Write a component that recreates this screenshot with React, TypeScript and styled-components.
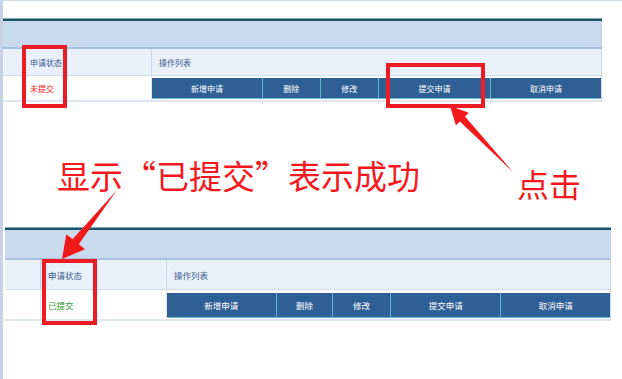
import React from "react";
import styled, { createGlobalStyle } from "styled-components";

const Global = createGlobalStyle`
  html, body { margin: 0; padding: 0; background: #ffffff; }
  body { font-family: "Noto Sans CJK SC", "Noto Sans", sans-serif; }
`;

const Page = styled.div`
  position: relative;
  width: 622px;
  height: 379px;
  overflow: hidden;
  display: flex;
  background: #ffffff;
`;

const LeftStrip = styled.div`
  width: 3px;
  flex: none;
  background: #c7d2e4;
`;

const Main = styled.div`
  flex: 1;
  display: flex;
  flex-direction: column;
  border-top: 1px solid #cfd6e2;
`;

const Panel = styled.section<{ $w: number; $ml: number; $mt: number }>`
  width: ${(p) => p.$w}px;
  margin-left: ${(p) => p.$ml}px;
  margin-top: ${(p) => p.$mt}px;
  display: flex;
  flex-direction: column;
  flex: none;
`;

const TopRule = styled.div`
  height: 3px;
  box-sizing: border-box;
  background: #1d5367;
  border-top: 1px solid #79aeb9;
`;

const Band = styled.div<{ $h: number }>`
  height: ${(p) => p.$h}px;
  background: #c9d9ee;
  border-bottom: 2px solid #a8c0df;
  border-right: 1px solid #bccde5;
`;

const Grid = styled.div<{ $cols: string }>`
  display: grid;
  grid-template-columns: ${(p) => p.$cols};
  border-bottom: 2px solid #dde6f2;
  border-right: 1px solid #c6d5ea;
`;

const HeadCell = styled.div<{ $h: number; $fs: number; $first?: boolean }>`
  height: ${(p) => p.$h}px;
  box-sizing: border-box;
  background: #e9f0f9;
  border-left: ${(p) => (p.$first ? "none" : "1px solid #c9d6e9")};
  border-bottom: 1px solid #d2dcec;
  display: flex;
  align-items: center;
  padding-left: 7px;
  color: #3a5a8c;
  font-size: ${(p) => p.$fs}px;
  white-space: nowrap;
`;

const DataCell = styled.div<{ $h: number; $fs: number; $color?: string; $first?: boolean }>`
  height: ${(p) => p.$h}px;
  box-sizing: border-box;
  background: #ffffff;
  border-left: ${(p) => (p.$first ? "none" : "1px solid #dfe6f0")};
  display: flex;
  align-items: center;
  padding-left: 7px;
  color: ${(p) => p.$color || "#333"};
  font-size: ${(p) => p.$fs}px;
  white-space: nowrap;
`;

const OpsCell = styled.div<{ $h: number; $pt: number }>`
  height: ${(p) => p.$h}px;
  box-sizing: border-box;
  padding-top: ${(p) => p.$pt}px;
  border-left: 1px solid #dfe6f0;
  display: flex;
  align-items: flex-start;
`;

const Btn = styled.div<{ $grow: number; $bh: number; $fs: number; $first?: boolean }>`
  flex: ${(p) => p.$grow} 1 0;
  height: ${(p) => p.$bh}px;
  box-sizing: border-box;
  background: #2e5f95;
  color: #ffffff;
  border-left: ${(p) => (p.$first ? "none" : "1px solid #5db4cf")};
  border-bottom: 1px solid #6bb8d2;
  display: flex;
  align-items: center;
  justify-content: center;
  font-size: ${(p) => p.$fs}px;
  white-space: nowrap;
`;

const Notes = styled.div`
  height: 125px;
  flex: none;
  display: flex;
  justify-content: space-between;
  align-items: flex-start;
  padding: 0 41px 0 54px;
`;

const Note = styled.div<{ $mt: number; $fs: number }>`
  margin-top: ${(p) => p.$mt}px;
  font-size: ${(p) => p.$fs}px;
  line-height: 1;
  color: #f5191d;
  white-space: nowrap;
`;

const Frame = styled.div<{ $x: number; $y: number; $w: number; $h: number }>`
  position: absolute;
  left: ${(p) => p.$x}px;
  top: ${(p) => p.$y}px;
  width: ${(p) => p.$w}px;
  height: ${(p) => p.$h}px;
  box-sizing: border-box;
  border: 4px solid #ec1c24;
  pointer-events: none;
`;

const Overlay = styled.svg`
  position: absolute;
  left: 0;
  top: 0;
  width: 622px;
  height: 379px;
  pointer-events: none;
`;

type Pt = [number, number];

function arrowPoints(tail: Pt, tip: Pt, headLen: number, headHalf: number, neck: number): string {
  const dx = tip[0] - tail[0];
  const dy = tip[1] - tail[1];
  const len = Math.hypot(dx, dy);
  const ux = dx / len;
  const uy = dy / len;
  const px = -uy;
  const py = ux;
  const bx = tip[0] - ux * headLen;
  const by = tip[1] - uy * headLen;
  const pts: Pt[] = [
    tail,
    [bx + px * neck, by + py * neck],
    [bx + px * headHalf, by + py * headHalf],
    tip,
    [bx - px * headHalf, by - py * headHalf],
    [bx - px * neck, by - py * neck],
  ];
  return pts.map((q) => `${q[0].toFixed(1)},${q[1].toFixed(1)}`).join(" ");
}

const ACTIONS: { label: string; grow: number }[] = [
  { label: "新增申请", grow: 111 },
  { label: "删除", grow: 57 },
  { label: "修改", grow: 58 },
  { label: "提交申请", grow: 112 },
  { label: "取消申请", grow: 111 },
];

type TableProps = {
  w: number;
  ml: number;
  mt: number;
  cols: string;
  bandH: number;
  headH: number;
  rowH: number;
  btnPad: number;
  btnH: number;
  fs: number;
  status: string;
  statusColor: string;
};

function StatusTable(p: TableProps) {
  return (
    <Panel $w={p.w} $ml={p.ml} $mt={p.mt}>
      <TopRule />
      <Band $h={p.bandH} />
      <Grid $cols={p.cols}>
        <HeadCell $h={p.headH} $fs={p.fs} $first />
        <HeadCell $h={p.headH} $fs={p.fs}>申请状态</HeadCell>
        <HeadCell $h={p.headH} $fs={p.fs}>操作列表</HeadCell>
        <DataCell $h={p.rowH} $fs={p.fs} $first />
        <DataCell $h={p.rowH} $fs={p.fs} $color={p.statusColor}>
          {p.status}
        </DataCell>
        <OpsCell $h={p.rowH} $pt={p.btnPad}>
          {ACTIONS.map((a, i) => (
            <Btn key={a.label} $grow={a.grow} $bh={p.btnH} $fs={p.fs} $first={i === 0}>
              {a.label}
            </Btn>
          ))}
        </OpsCell>
      </Grid>
    </Panel>
  );
}

export default function App() {
  return (
    <>
      <Global />
      <Page>
        <LeftStrip />
        <Main>
          <StatusTable
            w={599}
            ml={0}
            mt={17}
            cols="19px 129px 1fr"
            bandH={26}
            headH={27}
            rowH={24}
            btnPad={2}
            btnH={21}
            fs={8}
            status="未提交"
            statusColor="#ff2222"
          />
          <Notes>
            <Note $mt={57} $fs={33}>显示“已提交”表示成功</Note>
            <Note $mt={65} $fs={32}>点击</Note>
          </Notes>
          <StatusTable
            w={606}
            ml={2}
            mt={0}
            cols="35px 126px 1fr"
            bandH={28}
            headH={30}
            rowH={29}
            btnPad={3}
            btnH={25}
            fs={8.5}
            status="已提交"
            statusColor="#2f9a2f"
          />
        </Main>
        <Frame $x={22} $y={45} $w={45} $h={63} />
        <Frame $x={386} $y={63} $w={99} $h={45} />
        <Frame $x={42} $y={259} $w={55} $h={66} />
        <Overlay viewBox="0 0 622 379">
          <polygon points={arrowPoints([513, 172], [450, 106], 18, 9, 3.5)} fill="#f01a1a" />
          <polygon points={arrowPoints([117, 190], [62, 259], 22, 12, 4)} fill="#f01a1a" />
        </Overlay>
      </Page>
    </>
  );
}
